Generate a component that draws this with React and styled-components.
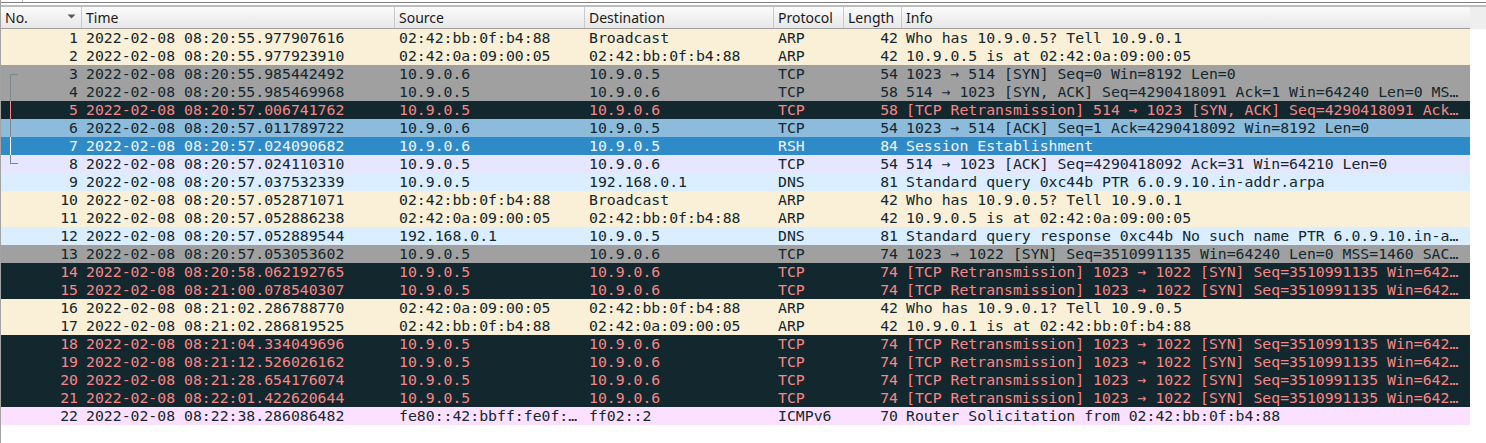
import React from 'react'
import styled, { createGlobalStyle } from 'styled-components';

const GlobalStyle = createGlobalStyle`
    html, body {
        margin: 0;
        padding: 0;
        background: #ffffff;
    }
    body {
        width: 1486px;
        height: 443px;
        overflow: hidden;
    }
`

const palette = {
    arp:  { bg: '#faf0d7', fg: '#12272e' },
    syn:  { bg: '#a0a0a0', fg: '#12272e' },
    bad:  { bg: '#12272e', fg: '#f78787' },
    ack:  { bg: '#8dbbdb', fg: '#12272e' },
    sel:  { bg: '#2e8bc7', fg: '#f2f6fa' },
    tcp:  { bg: '#e7e6ff', fg: '#12272e' },
    dns:  { bg: '#daeeff', fg: '#12272e' },
    icmp: { bg: '#fce0ff', fg: '#12272e' },
};

const treeColor = {
    bad: '#f78787',
    sel: '#ffffff',
};

const columns = ['No.', 'Time', 'Source', 'Destination', 'Protocol', 'Length', 'Info'];

const packets = [
    [1, '2022-02-08 08:20:55.977907616', '02:42:bb:0f:b4:88', 'Broadcast', 'ARP', 42, 'Who has 10.9.0.5? Tell 10.9.0.1', 'arp'],
    [2, '2022-02-08 08:20:55.977923910', '02:42:0a:09:00:05', '02:42:bb:0f:b4:88', 'ARP', 42, '10.9.0.5 is at 02:42:0a:09:00:05', 'arp'],
    [3, '2022-02-08 08:20:55.985442492', '10.9.0.6', '10.9.0.5', 'TCP', 54, '1023 → 514 [SYN] Seq=0 Win=8192 Len=0', 'syn', 'start'],
    [4, '2022-02-08 08:20:55.985469968', '10.9.0.5', '10.9.0.6', 'TCP', 58, '514 → 1023 [SYN, ACK] Seq=4290418091 Ack=1 Win=64240 Len=0 MSS=1460', 'syn', 'mid'],
    [5, '2022-02-08 08:20:57.006741762', '10.9.0.5', '10.9.0.6', 'TCP', 58, '[TCP Retransmission] 514 → 1023 [SYN, ACK] Seq=4290418091 Ack=1 Win=64240 Len=0 MSS=1460', 'bad', 'mid'],
    [6, '2022-02-08 08:20:57.011789722', '10.9.0.6', '10.9.0.5', 'TCP', 54, '1023 → 514 [ACK] Seq=1 Ack=4290418092 Win=8192 Len=0', 'ack', 'mid'],
    [7, '2022-02-08 08:20:57.024090682', '10.9.0.6', '10.9.0.5', 'RSH', 84, 'Session Establishment', 'sel', 'mid'],
    [8, '2022-02-08 08:20:57.024110310', '10.9.0.5', '10.9.0.6', 'TCP', 54, '514 → 1023 [ACK] Seq=4290418092 Ack=31 Win=64210 Len=0', 'tcp', 'end'],
    [9, '2022-02-08 08:20:57.037532339', '10.9.0.5', '192.168.0.1', 'DNS', 81, 'Standard query 0xc44b PTR 6.0.9.10.in-addr.arpa', 'dns'],
    [10, '2022-02-08 08:20:57.052871071', '02:42:bb:0f:b4:88', 'Broadcast', 'ARP', 42, 'Who has 10.9.0.5? Tell 10.9.0.1', 'arp'],
    [11, '2022-02-08 08:20:57.052886238', '02:42:0a:09:00:05', '02:42:bb:0f:b4:88', 'ARP', 42, '10.9.0.5 is at 02:42:0a:09:00:05', 'arp'],
    [12, '2022-02-08 08:20:57.052889544', '192.168.0.1', '10.9.0.5', 'DNS', 81, 'Standard query response 0xc44b No such name PTR 6.0.9.10.in-addr.arpa SOA', 'dns'],
    [13, '2022-02-08 08:20:57.053053602', '10.9.0.5', '10.9.0.6', 'TCP', 74, '1023 → 1022 [SYN] Seq=3510991135 Win=64240 Len=0 MSS=1460 SACK_PERM=1', 'syn'],
    [14, '2022-02-08 08:20:58.062192765', '10.9.0.5', '10.9.0.6', 'TCP', 74, '[TCP Retransmission] 1023 → 1022 [SYN] Seq=3510991135 Win=64240 Len=0', 'bad'],
    [15, '2022-02-08 08:21:00.078540307', '10.9.0.5', '10.9.0.6', 'TCP', 74, '[TCP Retransmission] 1023 → 1022 [SYN] Seq=3510991135 Win=64240 Len=0', 'bad'],
    [16, '2022-02-08 08:21:02.286788770', '02:42:0a:09:00:05', '02:42:bb:0f:b4:88', 'ARP', 42, 'Who has 10.9.0.1? Tell 10.9.0.5', 'arp'],
    [17, '2022-02-08 08:21:02.286819525', '02:42:bb:0f:b4:88', '02:42:0a:09:00:05', 'ARP', 42, '10.9.0.1 is at 02:42:bb:0f:b4:88', 'arp'],
    [18, '2022-02-08 08:21:04.334049696', '10.9.0.5', '10.9.0.6', 'TCP', 74, '[TCP Retransmission] 1023 → 1022 [SYN] Seq=3510991135 Win=64240 Len=0', 'bad'],
    [19, '2022-02-08 08:21:12.526026162', '10.9.0.5', '10.9.0.6', 'TCP', 74, '[TCP Retransmission] 1023 → 1022 [SYN] Seq=3510991135 Win=64240 Len=0', 'bad'],
    [20, '2022-02-08 08:21:28.654176074', '10.9.0.5', '10.9.0.6', 'TCP', 74, '[TCP Retransmission] 1023 → 1022 [SYN] Seq=3510991135 Win=64240 Len=0', 'bad'],
    [21, '2022-02-08 08:22:01.422620644', '10.9.0.5', '10.9.0.6', 'TCP', 74, '[TCP Retransmission] 1023 → 1022 [SYN] Seq=3510991135 Win=64240 Len=0', 'bad'],
    [22, '2022-02-08 08:22:38.286086482', 'fe80::42:bbff:fe0f:b488', 'ff02::2', 'ICMPv6', 70, 'Router Solicitation from 02:42:bb:0f:b4:88', 'icmp'],
];

const SortArrow = () => (
    <ArrowIcon width="9" height="5" viewBox="0 0 9 5">
        <path d="M0.5 0.5 L8.5 0.5 L4.5 4.5 Z" fill="#5a5a5a" />
    </ArrowIcon>
);

const PacketRow = ({ packet }) => {
    const [no, time, src, dst, proto, len, info, kind, tree] = packet;
    const colors = palette[kind];
    return (
        <Row bg={colors.bg} fg={colors.fg}>
            <Cell align="right">
                {tree && <TreeLine part={tree} color={treeColor[kind] || '#7d8790'} />}
                {no}
            </Cell>
            <Cell>{time}</Cell>
            <Cell>{src}</Cell>
            <Cell>{dst}</Cell>
            <Cell>{proto}</Cell>
            <Cell align="right">{len}</Cell>
            <Cell>{info}</Cell>
        </Row>
    );
};

const App = () => {
    return (
        <Wrap>
            <GlobalStyle />
            <FilterEdge>
                <FilterDivider />
            </FilterEdge>
            <Splitter />
            <HeaderBar>
                <Header>
                    {columns.map((c, i) => (
                        <HeaderCell key={c}>
                            {c}
                            {i === 0 && <SortArrow />}
                        </HeaderCell>
                    ))}
                </Header>
                <HeaderFiller />
            </HeaderBar>
            <List>
                {packets.map(p => <PacketRow key={p[0]} packet={p} />)}
            </List>
        </Wrap>
    )
};

const grid = '81px 313px 190px 189px 70px 58px 568px';

const Wrap = styled.div`
    width: 1486px;
    height: 443px;
    background: #ffffff;
    border-left: 1px solid #a3a3a3;
    box-sizing: border-box;
    display: flex;
    flex-direction: column;
`

const FilterEdge = styled.div`
    height: 2px;
    border-bottom: 1px solid #7f7f7f;
    padding-left: 21px;
    display: flex;
`

const FilterDivider = styled.div`
    width: 1px;
    background: #b5b5b5;
`

const Splitter = styled.div`
    height: 2px;
    margin-top: 2px;
    background: #bcbcbc;
`

const HeaderBar = styled.div`
    display: flex;
    height: 22px;
`

const Header = styled.div`
    display: grid;
    grid-template-columns: ${grid};
    width: 1469px;
    background: linear-gradient(to bottom, #fbfbfb, #e7e7e7);
    border-bottom: 1px solid #a0a0a0;
    box-sizing: border-box;
`

const HeaderFiller = styled.div`
    flex: 1;
    background: #eeeeee;
`

const HeaderCell = styled.div`
    position: relative;
    display: flex;
    align-items: center;
    padding: 0 4px;
    border-right: 1px solid #c9c9c9;
    font-family: "Noto Sans", "DejaVu Sans", sans-serif;
    font-size: 14px;
    color: #1a1a1a;
    white-space: nowrap;
    overflow: hidden;

    &:last-child {
        border-right: none;
    }
`

const ArrowIcon = styled.svg`
    position: absolute;
    right: 5px;
    top: 7px;
`

const List = styled.div`
    display: flex;
    flex-direction: column;
    width: 1469px;
`

const Row = styled.div`
    display: grid;
    grid-template-columns: ${grid};
    height: 18px;
    background: ${props => props.bg};
    color: ${props => props.fg};
    font-family: "DejaVu Sans Mono", "Liberation Mono", monospace;
    font-size: 14.8px;
    line-height: 18px;
`

const Cell = styled.div`
    position: relative;
    padding: 0 4px;
    text-align: ${props => props.align || 'left'};
    white-space: nowrap;
    overflow: hidden;
    text-overflow: ellipsis;
`

const TreeLine = styled.span`
    position: absolute;
    left: 9px;
    width: 8px;
    top: ${props => props.part === 'start' ? '9px' : '0'};
    height: ${props => props.part === 'mid' ? '18px' : '9px'};
    border-left: 1px solid ${props => props.color};
    border-top: ${props => props.part === 'start' ? `1px solid ${props.color}` : 'none'};
    border-bottom: ${props => props.part === 'end' ? `1px solid ${props.color}` : 'none'};
    box-sizing: border-box;
`

export default App;
